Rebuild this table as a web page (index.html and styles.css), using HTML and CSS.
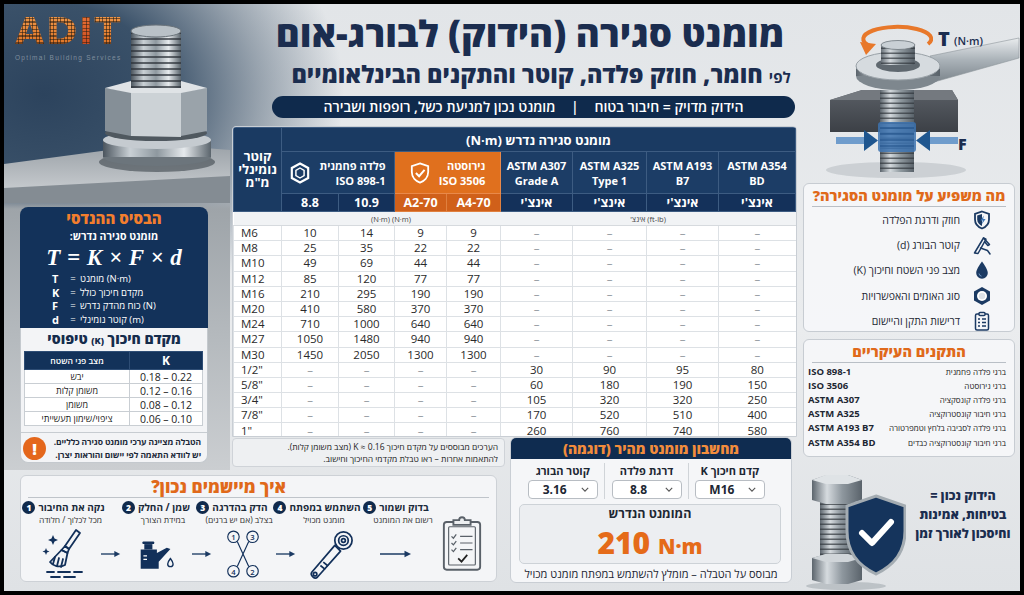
FILE: index.html
```html
<!DOCTYPE html>
<html lang="he">
<head>
<meta charset="utf-8">
<title>מומנט סגירה לבורג-אום</title>
<link rel="stylesheet" href="styles.css">
</head>
<body>
<main class="frame">

  <section class="left">
    <div class="hero">
      <svg class="hero-art" viewBox="0 0 226 199" width="226" height="199" aria-hidden="true">
        <defs>
          <linearGradient id="stl" x1="0" x2="1" y1="0" y2="0">
            <stop offset="0" stop-color="#4b555e"/><stop offset=".25" stop-color="#c9d0d5"/><stop offset=".5" stop-color="#8e989f"/><stop offset=".75" stop-color="#e6eaed"/><stop offset="1" stop-color="#5a646c"/>
          </linearGradient>
          <linearGradient id="plate" x1="0" y1="0" x2="0" y2="1"><stop offset="0" stop-color="#9aa1a7"/><stop offset="1" stop-color="#d3d6d9"/></linearGradient>
          <pattern id="thr" x="127" y="0" width="50" height="6" patternUnits="userSpaceOnUse"><rect width="50" height="6" fill="url(#stl)"/><rect y="4" width="50" height="2" fill="#2b3137" opacity=".7"/></pattern>
        </defs>
        <polygon points="0,160 150,140 226,146 226,199 0,199" fill="url(#plate)"/>
        <polygon points="0,184 226,172 226,199 0,199" fill="#848c93"/>
        <ellipse cx="153" cy="158" rx="58" ry="10" fill="#3e464d" opacity=".6"/>
        <ellipse cx="153" cy="153" rx="54" ry="9" fill="#6c757c"/>
        <rect x="99" y="136" width="108" height="17" fill="url(#stl)"/>
        <ellipse cx="153" cy="136" rx="54" ry="9" fill="#c5cbd0"/>
        <ellipse cx="152" cy="129" rx="51" ry="8" fill="#4f585f"/>
        <polygon points="101,84 127,88 127,132 101,127" fill="#858f97"/>
        <polygon points="127,88 177,88 177,133 127,132" fill="#ccd2d6"/>
        <polygon points="177,88 203,84 203,127 177,132" fill="#9aa3aa"/>
        <polygon points="101,84 127,77 177,77 203,84 177,89 127,89" fill="#dfe3e6"/>
        <rect x="127" y="26" width="50" height="58" fill="url(#thr)"/>
        <ellipse cx="152" cy="27" rx="25" ry="6" fill="#b9c1c7" stroke="#6a737a"/>
      </svg>
      <div class="logo">
        <div class="logo-word">AD<span class="logo-i">I</span>T</div>
        <div class="logo-sub">Optimal Building Services</div>
      </div>
    </div>

    <div class="basis" dir="rtl">
      <div class="basis-top">
        <h2 class="basis-title">הבסיס ההנדסי</h2>
        <div class="basis-sub">מומנט סגירה נדרש:</div>
        <div class="formula" dir="ltr">T = K × F × d</div>
        <ul class="legend" dir="ltr">
          <li><b>T</b><span class="eq">=</span><span>מומנט (N·m)</span></li>
          <li><b>K</b><span class="eq">=</span><span>מקדם חיכוך כולל</span></li>
          <li><b>F</b><span class="eq">=</span><span>כוח מהדק נדרש (N)</span></li>
          <li><b>d</b><span class="eq">=</span><span>קוטר נומינלי (m)</span></li>
        </ul>
      </div>
      <div class="basis-bottom">
        <h3 class="k-title">מקדם חיכוך <small>(K)</small> טיפוסי</h3>
        <table class="k-table">
          <thead><tr><th class="kc">K</th><th class="sc">מצב פני השטח</th></tr></thead>
          <tbody>
            <tr><td class="kv" dir="ltr">0.18 – 0.22</td><td>יבש</td></tr>
            <tr><td class="kv" dir="ltr">0.12 – 0.16</td><td>משומן קלות</td></tr>
            <tr><td class="kv" dir="ltr">0.08 – 0.12</td><td>משומן</td></tr>
            <tr><td class="kv" dir="ltr">0.06 – 0.10</td><td>ציפוי/שימון תעשייתי</td></tr>
          </tbody>
        </table>
        <div class="warn">
          <p>הטבלה מציינה ערכי מומנט סגירה כלליים.<br>יש לוודא התאמה לפי יישום והוראות יצרן.</p>
          <span class="warn-ico">!</span>
        </div>
      </div>
    </div>
  </section>

  <header class="title-area" dir="rtl">
    <h1 class="title">מומנט סגירה (הידוק) לבורג-אום</h1>
    <p class="subtitle"><small>לפי</small> חומר, חוזק פלדה, קוטר והתקנים הבינלאומיים</p>
    <div class="pill">הידוק מדויק = חיבור בטוח <span class="bar">|</span> מומנט נכון למניעת כשל, רופפות ושבירה</div>
  </header>

  <section class="tbl-wrap">
    <table class="torque">
      <colgroup>
        <col style="width:48px"><col style="width:57px"><col style="width:56px"><col style="width:52px"><col style="width:54px"><col style="width:72px"><col style="width:74px"><col style="width:72px"><col>
      </colgroup>
      <thead>
        <tr class="r1">
          <th rowspan="3" class="corner">קוטר נומינלי מ"מ</th>
          <th colspan="8">מומנט סגירה נדרש (N·m)</th>
        </tr>
        <tr class="r2">
          <th colspan="2"><div class="grp"><span>פלדה פחמנית<br>ISO 898-1</span>
            <svg viewBox="0 0 22 24" width="20" height="22"><polygon points="11,1.5 20,6.5 20,17.5 11,22.5 2,17.5 2,6.5" fill="none" stroke="#fff" stroke-width="2.4"/><polygon points="11,6.5 15.5,9.2 15.5,14.8 11,17.5 6.5,14.8 6.5,9.2" fill="none" stroke="#fff" stroke-width="1.6"/></svg></div></th>
          <th colspan="2" class="or"><div class="grp"><span>נירוסטה<br>ISO 3506</span>
            <svg viewBox="0 0 22 24" width="20" height="22"><path d="M11 1.5 L20 4.5 V11 C20 17 15.5 21 11 22.5 C6.5 21 2 17 2 11 V4.5 Z" fill="none" stroke="#fff" stroke-width="2"/><path d="M6.5 12 L10 15.5 L16 8.5" fill="none" stroke="#fff" stroke-width="2.2"/></svg></div></th>
          <th>ASTM A307<br>Grade A</th>
          <th>ASTM A325<br>Type 1</th>
          <th>ASTM A193<br>B7</th>
          <th>ASTM A354<br>BD</th>
        </tr>
        <tr class="r3">
          <th>8.8</th><th>10.9</th><th class="or2">A2-70</th><th class="or2">A4-70</th>
          <th>אינצ'י</th><th>אינצ'י</th><th>אינצ'י</th><th>אינצ'י</th>
        </tr>
        <tr class="r4">
          <td></td><td colspan="4">(N·m) (N·m)</td><td colspan="4">(ft-lb) אינצ'</td>
        </tr>
      </thead>
      <tbody>
        <tr><td class="sz">M6</td><td>10</td><td>14</td><td>9</td><td>9</td><td class="d">–</td><td class="d">–</td><td class="d">–</td><td class="d">–</td></tr>
        <tr><td class="sz">M8</td><td>25</td><td>35</td><td>22</td><td>22</td><td class="d">–</td><td class="d">–</td><td class="d">–</td><td class="d">–</td></tr>
        <tr><td class="sz">M10</td><td>49</td><td>69</td><td>44</td><td>44</td><td class="d">–</td><td class="d">–</td><td class="d">–</td><td class="d">–</td></tr>
        <tr><td class="sz">M12</td><td>85</td><td>120</td><td>77</td><td>77</td><td class="d">–</td><td class="d">–</td><td class="d">–</td><td class="d">–</td></tr>
        <tr><td class="sz">M16</td><td>210</td><td>295</td><td>190</td><td>190</td><td class="d">–</td><td class="d">–</td><td class="d">–</td><td class="d">–</td></tr>
        <tr><td class="sz">M20</td><td>410</td><td>580</td><td>370</td><td>370</td><td class="d">–</td><td class="d">–</td><td class="d">–</td><td class="d">–</td></tr>
        <tr><td class="sz">M24</td><td>710</td><td>1000</td><td>640</td><td>640</td><td class="d">–</td><td class="d">–</td><td class="d">–</td><td class="d">–</td></tr>
        <tr><td class="sz">M27</td><td>1050</td><td>1480</td><td>940</td><td>940</td><td class="d">–</td><td class="d">–</td><td class="d">–</td><td class="d">–</td></tr>
        <tr><td class="sz">M30</td><td>1450</td><td>2050</td><td>1300</td><td>1300</td><td class="d">–</td><td class="d">–</td><td class="d">–</td><td class="d">–</td></tr>
        <tr><td class="sz">1/2"</td><td class="d">–</td><td class="d">–</td><td class="d">–</td><td class="d">–</td><td>30</td><td>90</td><td>95</td><td>80</td></tr>
        <tr><td class="sz">5/8"</td><td class="d">–</td><td class="d">–</td><td class="d">–</td><td class="d">–</td><td>60</td><td>180</td><td>190</td><td>150</td></tr>
        <tr><td class="sz">3/4"</td><td class="d">–</td><td class="d">–</td><td class="d">–</td><td class="d">–</td><td>105</td><td>320</td><td>320</td><td>250</td></tr>
        <tr><td class="sz">7/8"</td><td class="d">–</td><td class="d">–</td><td class="d">–</td><td class="d">–</td><td>170</td><td>520</td><td>510</td><td>400</td></tr>
        <tr><td class="sz">1"</td><td class="d">–</td><td class="d">–</td><td class="d">–</td><td class="d">–</td><td>260</td><td>760</td><td>740</td><td>580</td></tr>
      </tbody>
    </table>
  </section>

  <div class="note" dir="rtl">הערכים מבוססים על מקדם חיכוך K ≈ 0.16 (מצב משומן קלות).<br>להתאמות אחרות – ראו טבלת מקדמי החיכוך וחישוב.</div>

  <section class="calc" dir="rtl">
    <div class="calc-title">מחשבון מומנט מהיר (דוגמה)</div>
    <div class="calc-fields">
      <div class="field"><label>קדם חיכוך K</label><div class="sel"><span>M16</span><svg viewBox="0 0 10 6" width="8" height="5"><path d="M1 1 L5 5 L9 1" fill="none" stroke="#555" stroke-width="1.4"/></svg></div></div>
      <div class="field"><label>דרגת פלדה</label><div class="sel"><span>8.8</span><svg viewBox="0 0 10 6" width="8" height="5"><path d="M1 1 L5 5 L9 1" fill="none" stroke="#555" stroke-width="1.4"/></svg></div></div>
      <div class="field"><label>קוטר הבורג</label><div class="sel"><span>3.16</span><svg viewBox="0 0 10 6" width="8" height="5"><path d="M1 1 L5 5 L9 1" fill="none" stroke="#555" stroke-width="1.4"/></svg></div></div>
    </div>
    <div class="result">
      <div class="result-label">המומנט הנדרש</div>
      <div class="result-val" dir="ltr">210 <small>N·m</small></div>
    </div>
    <div class="calc-foot">מבוסס על הטבלה – מומלץ להשתמש במפתח מומנט מכויל</div>
  </section>

  <section class="right">
    <svg class="wrench-art" viewBox="0 0 220 176" width="220" height="176" aria-hidden="true">
      <defs>
        <linearGradient id="stl2" x1="0" x2="1" y1="0" y2="0">
          <stop offset="0" stop-color="#5b646c"/><stop offset=".3" stop-color="#d3d9dd"/><stop offset=".6" stop-color="#8f999f"/><stop offset="1" stop-color="#59626a"/>
        </linearGradient>
        <linearGradient id="wr" x1="0" x2="0" y1="0" y2="1"><stop offset="0" stop-color="#e9ecee"/><stop offset=".5" stop-color="#aab2b8"/><stop offset="1" stop-color="#7c858c"/></linearGradient>
        <linearGradient id="blk" x1="0" x2="0" y1="0" y2="1"><stop offset="0" stop-color="#5a5f66"/><stop offset="1" stop-color="#3c4046"/></linearGradient>
        <pattern id="thr2" x="80" y="0" width="34" height="5" patternUnits="userSpaceOnUse"><rect width="34" height="5" fill="url(#stl2)"/><rect y="3.5" width="34" height="1.5" fill="#30363c" opacity=".7"/></pattern>
      </defs>
      <ellipse cx="96" cy="166" rx="70" ry="8" fill="#9aa3aa" opacity=".35"/>
      <polygon points="30,96 62,86 152,86 158,96 158,128 30,128" fill="url(#blk)"/>
      <polygon points="30,96 62,86 152,86 158,96" fill="#74797f"/>
      <rect x="80" y="86" width="34" height="82" fill="url(#thr2)"/>
      <rect x="78" y="118" width="38" height="30" rx="3" fill="#3d73b0" opacity=".85"/>
      <path d="M80 124 H114 M80 130 H114 M80 136 H114 M80 142 H114" stroke="#1f4f86" stroke-width="1.2"/>
      <rect x="36" y="133" width="30" height="7" fill="#6f9ccc"/>
      <polygon points="64,126 78,136.5 64,147" fill="#1f568f"/>
      <rect x="128" y="133" width="30" height="7" fill="#6f9ccc"/>
      <polygon points="130,126 116,136.5 130,147" fill="#1f568f"/>
      <text x="158" y="146" class="svg-f">F</text>
      <polygon points="130,52 219,34 219,54 134,78" fill="url(#wr)" stroke="#8d959b" stroke-width=".6"/>
      <ellipse cx="98" cy="72" rx="42" ry="14" fill="#7e878e"/>
      <rect x="56" y="62" width="84" height="10" fill="url(#stl2)"/>
      <ellipse cx="98" cy="62" rx="42" ry="14" fill="#d6dbdf" stroke="#9aa2a8"/>
      <ellipse cx="98" cy="61" rx="22" ry="7" fill="#5f686f"/>
      <rect x="81" y="40" width="34" height="21" fill="url(#thr2)"/>
      <ellipse cx="98" cy="41" rx="17" ry="4.5" fill="#c9d0d5" stroke="#6e777e" stroke-width=".8"/>
      <path d="M70 42 A34 12 0 1 1 128 40" fill="none" stroke="#e8782a" stroke-width="4"/>
      <polygon points="60,38 76,40 66,51" fill="#e8782a"/>
      <text x="138" y="42" class="svg-t">T</text>
      <text x="154" y="41" class="svg-tu">(N·m)</text>
    </svg>

    <div class="card affects" dir="rtl">
      <h3 class="card-title">מה משפיע על מומנט הסגירה?</h3>
      <ul class="aff-list">
        <li><svg viewBox="0 0 20 20"><path d="M10 1.5 L17 4 V9.5 C17 14 14 17 10 18.5 C6 17 3 14 3 9.5 V4 Z" fill="none" stroke="#1b3a63" stroke-width="1.8"/><path d="M10 4 V16 C7.5 15 5.2 12.5 5.2 9.5 V5.5 Z" fill="#1b3a63"/><path d="M11.8 5.5 L8.6 10.6 H10.9 L9.6 14.5 L13.6 9 H11.2 Z" fill="#3f78b8"/></svg><span>חוזק ודרגת הפלדה</span></li>
        <li><svg viewBox="0 0 20 20"><g fill="none" stroke="#1b3a63" stroke-width="1.5" stroke-linejoin="round" stroke-linecap="round"><path d="M2.5 18 L11.5 3 L14 4.2 L6 18.5 Z"/><path d="M11.5 3 L17.5 9.5 L15.8 10.5 L12.8 7"/><path d="M8.5 13 L15.5 15.5 L18 19"/></g></svg><span>קוטר הבורג (d)</span></li>
        <li><svg viewBox="0 0 20 20"><path d="M10 1.5 C10 1.5 4.2 9 4.2 13 A5.8 5.8 0 0 0 15.8 13 C15.8 9 10 1.5 10 1.5 Z" fill="#1b3a63"/><path d="M7 13.5 A3 3 0 0 0 9.5 16.2" fill="none" stroke="#6e96c4" stroke-width="1"/></svg><span>מצב פני השטח וחיכוך (K)</span></li>
        <li><svg viewBox="0 0 20 20"><polygon points="10,1 18,5.5 18,14.5 10,19 2,14.5 2,5.5" fill="#1b3a63"/><circle cx="10" cy="10" r="5" fill="#fff"/><circle cx="10" cy="10" r="3.2" fill="#1b3a63" opacity=".15"/></svg><span>סוג האומים והאפשרויות</span></li>
        <li><svg viewBox="0 0 20 20"><g fill="none" stroke="#1b3a63" stroke-width="1.5"><rect x="3.5" y="3" width="13" height="16" rx="1.5"/><rect x="7" y="1.5" width="6" height="3" rx="1" fill="#fff"/><path d="M6 8 h2 M10 8 h4 M6 11.5 h2 M10 11.5 h4 M6 15 h2 M10 15 h4" stroke-width="1.3"/></g></svg><span>דרישות התקן והיישום</span></li>
      </ul>
    </div>

    <div class="card standards" dir="rtl">
      <h3 class="card-title">התקנים העיקריים</h3>
      <ul class="std-list">
        <li><span class="std-desc">ברגי פלדה פחמנית</span><b class="std-code">ISO 898-1</b></li>
        <li><span class="std-desc">ברגי נירוסטה</span><b class="std-code">ISO 3506</b></li>
        <li><span class="std-desc">ברגי פלדה קונסקציה</span><b class="std-code">ASTM A307</b></li>
        <li><span class="std-desc">ברגי חיבור קונסטרוקציה</span><b class="std-code">ASTM A325</b></li>
        <li><span class="std-desc">ברגי פלדה לסביבה בלחץ וטמפרטורה</span><b class="std-code">ASTM A193 B7</b></li>
        <li><span class="std-desc">ברגי חיבור קונסטרוקציה כבדים</span><b class="std-code">ASTM A354 BD</b></li>
      </ul>
    </div>
  </section>

  <section class="steps">
    <h3 class="steps-title" dir="rtl">איך מיישמים נכון?</h3>
    <div class="steps-grid">
      <div class="sh s1"><div class="sh-top"><span class="num">1</span><b>נקה את החיבור</b></div><div class="sh-sub">מכל לכלוך / חלודה</div></div>
      <div class="sh s2"><div class="sh-top"><span class="num">2</span><b>שמן / החלק</b></div><div class="sh-sub">במידת הצורך</div></div>
      <div class="sh s3"><div class="sh-top"><span class="num">3</span><b>הדק בהדרגה</b></div><div class="sh-sub">בצלב (אם יש ברגים)</div></div>
      <div class="sh s4"><div class="sh-top"><span class="num">4</span><b>השתמש במפתח</b></div><div class="sh-sub">מומנט מכויל</div></div>
      <div class="sh s5"><div class="sh-top"><span class="num">5</span><b>בדוק ושמור</b></div><div class="sh-sub">רשום את המומנט</div></div>

      <svg class="ico i1" viewBox="0 0 50 54" width="50" height="54">
        <g fill="none" stroke="#12305a" stroke-width="1.8" stroke-linecap="round" stroke-linejoin="round">
          <path d="M37 3 L41 6 L30 22 L26 19 Z"/>
          <path d="M26 19 L30 22 L28.5 26 L22.5 23 Z"/>
          <path d="M22.5 23 L28.5 26 L26 38 C20 41 14 39 11 35 Z"/>
          <path d="M16 30 L14 37 M20 31 L18 39 M24 32 L22 40"/>
          <path d="M8 45 H15 M19 45 H31 M35 45 H43 M12 50 H21 M25 50 H36"/>
        </g>
        <path d="M14 8 l1.5 3.5 3.5 1.5 -3.5 1.5 -1.5 3.5 -1.5 -3.5 -3.5 -1.5 3.5 -1.5z" fill="#12305a"/>
        <path d="M7 21 l1 2.5 2.5 1 -2.5 1 -1 2.5 -1 -2.5 -2.5 -1 2.5 -1z" fill="#12305a"/>
      </svg>
      <svg class="ar a1" viewBox="0 0 24 8" width="20" height="8"><path d="M0 4 H19" stroke="#1b3a63" stroke-width="1.6"/><path d="M16 0.5 L23 4 L16 7.5 Z" fill="#1b3a63"/></svg>
      <svg class="ico i2" viewBox="0 0 44 40" width="40" height="36">
        <path d="M5 15 h18 v4 l11 -6 4 1.5 -13 14 v8 H5 Z" fill="#12305a"/>
        <rect x="9" y="9" width="9" height="6" fill="#12305a"/>
        <rect x="7" y="6" width="13" height="3" rx="1" fill="#12305a"/>
        <path d="M8 22 h4 M8 26 h4" stroke="#fff" stroke-width="1.5"/>
        <path d="M38 25 c0 0 -3 4 -3 6 a3 3 0 0 0 6 0 c0 -2 -3 -6 -3 -6z" fill="none" stroke="#12305a" stroke-width="1.5"/>
      </svg>
      <svg class="ar a2" viewBox="0 0 24 8" width="20" height="8"><path d="M0 4 H19" stroke="#1b3a63" stroke-width="1.6"/><path d="M16 0.5 L23 4 L16 7.5 Z" fill="#1b3a63"/></svg>
      <svg class="ico i3" viewBox="0 0 44 54" width="42" height="52">
        <g fill="none" stroke="#12305a" stroke-width="1.2">
          <circle cx="12" cy="9" r="6"/><circle cx="32" cy="9" r="6"/><circle cx="12" cy="45" r="6"/><circle cx="32" cy="45" r="6"/>
          <path d="M16 14 L28 40 M28 14 L16 40"/>
        </g>
        <text x="12" y="12.5" class="svg-n">1</text><text x="32" y="12.5" class="svg-n">3</text><text x="12" y="48.5" class="svg-n">4</text><text x="32" y="48.5" class="svg-n">2</text>
      </svg>
      <svg class="ar a3" viewBox="0 0 24 8" width="20" height="8"><path d="M0 4 H19" stroke="#1b3a63" stroke-width="1.6"/><path d="M16 0.5 L23 4 L16 7.5 Z" fill="#1b3a63"/></svg>
      <svg class="ico i4" viewBox="0 0 50 56" width="48" height="54">
        <g fill="none" stroke="#12305a" stroke-width="1.8" stroke-linejoin="round">
          <path d="M30 19 L36 25 L12 52 C9 55 4 50 6 47 Z"/>
          <circle cx="39" cy="14" r="9"/><circle cx="39" cy="14" r="5"/><circle cx="39" cy="14" r="2"/>
          <circle cx="9.5" cy="49" r="1.8"/>
          <path d="M15 40 L20 44 M18 36.5 L23 40.5"/>
        </g>
      </svg>
      <svg class="ar a4" viewBox="0 0 34 8" width="32" height="8"><path d="M0 4 H29" stroke="#1b3a63" stroke-width="1.6"/><path d="M26 0.5 L33 4 L26 7.5 Z" fill="#1b3a63"/></svg>
      <svg class="ico i5" viewBox="0 0 44 60" width="42" height="58">
        <g fill="none" stroke="#5a6169" stroke-width="2">
          <rect x="3" y="8" width="38" height="50" rx="3"/>
          <rect x="8" y="13" width="28" height="40" rx="1" stroke-width="1.2"/>
          <path d="M13 11 V6 h6 a3 3 0 0 1 6 0 h6 v5 z" fill="#eceef0"/>
          <path d="M11 23 l2 2 3-4 M11 30 l2 2 3-4 M11 37 l2 2 3-4" stroke-width="1.3"/>
          <path d="M20 23 H33 M20 30 H33 M20 37 H33" stroke-width="1.3"/>
          <path d="M18 46 l3.5 3.5 6-7" stroke="#222" stroke-width="1.8"/>
        </g>
      </svg>
    </div>
  </section>

  <section class="badge">
    <svg class="badge-art" viewBox="0 0 100 120" width="100" height="120" aria-hidden="true">
      <defs>
        <linearGradient id="stl3" x1="0" x2="1" y1="0" y2="0">
          <stop offset="0" stop-color="#5c656d"/><stop offset=".3" stop-color="#d6dbdf"/><stop offset=".6" stop-color="#8f989f"/><stop offset="1" stop-color="#5a636b"/>
        </linearGradient>
        <pattern id="thr3" x="14" y="0" width="34" height="5" patternUnits="userSpaceOnUse"><rect width="34" height="5" fill="url(#stl3)"/><rect y="3.5" width="34" height="1.5" fill="#30363c" opacity=".7"/></pattern>
      </defs>
      <ellipse cx="40" cy="116" rx="40" ry="4" fill="#9aa1a7" opacity=".5"/>
      <rect x="14" y="28" width="34" height="62" fill="url(#thr3)"/>
      <polygon points="6,10 20,5 42,5 56,10 56,30 42,34 20,34 6,30" fill="url(#stl3)"/>
      <polygon points="6,10 20,5 42,5 56,10 42,14 20,14" fill="#dfe3e6"/>
      <polygon points="6,88 20,84 42,84 56,88 56,110 42,114 20,114 6,110" fill="url(#stl3)"/>
      <polygon points="6,88 20,84 42,84 56,88 42,92 20,92" fill="#d0d5d9"/>
      <path d="M70 26 L99 36 V61 C99 84 85 97 70 104 C55 97 41 84 41 61 V36 Z" fill="#15345c" stroke="#a4acb2" stroke-width="3"/>
      <path d="M56 63 L66 73 L85 52" fill="none" stroke="#fff" stroke-width="6" stroke-linecap="round" stroke-linejoin="round"/>
    </svg>
    <p class="badge-text" dir="rtl">הידוק נכון =<br>בטיחות, אמינות<br>וחיסכון לאורך זמן</p>
  </section>

</main>
</body>
</html>
```

FILE: styles.css
```css
* { box-sizing: border-box; }
html, body { margin: 0; padding: 0; }
body {
  background: #000;
  font-family: "Open Sans", "Liberation Sans", "DejaVu Sans", sans-serif;
  color: #1d2733;
}
h1, h2, h3, p, ul { margin: 0; padding: 0; }
ul { list-style: none; }

.frame {
  width: 1016px;
  height: 587px;
  margin: 4px;
  display: grid;
  grid-template-columns: 226px 275px 295px 220px;
  grid-template-rows: 121px 312px 33px 121px;
  grid-template-areas:
    "left title title right"
    "left table table right"
    "left note calc right"
    "steps steps calc badge";
  overflow: hidden;
  background:
    radial-gradient(ellipse 300px 230px at 40px 90px, #2c435d 0%, #3a5169 40%, rgba(90,108,126,.55) 72%, rgba(220,225,230,0) 100%),
    linear-gradient(180deg, #e2e5e8 0%, #eaecee 55%, #dfe2e5 100%);
}

/* ---------- left column ---------- */
.left {
  grid-area: left;
  display: flex;
  flex-direction: column;
  background: linear-gradient(180deg, rgba(0,0,0,0) 0, rgba(0,0,0,0) 190px, #9ea4a9 205px, #b4b9bd 330px, #cbced1 466px);
}
.hero { position: relative; height: 199px; flex: none; }
.hero-art { position: absolute; left: 0; top: 0; }
.logo { position: relative; padding: 4px 0 0 11px; width: 140px; }
.logo-word {
  font-family: "DejaVu Sans", sans-serif;
  font-weight: 700;
  font-size: 38px;
  line-height: 46px;
  letter-spacing: 1.5px;
  background-image:
    repeating-linear-gradient(90deg, rgba(30,25,20,.55) 0 1px, transparent 1px 3.5px),
    repeating-linear-gradient(0deg, rgba(30,25,20,.55) 0 1px, transparent 1px 3.5px),
    linear-gradient(180deg, #f4a153, #d8691b);
  -webkit-background-clip: text;
  background-clip: text;
  color: transparent;
}
.logo-i {
  background-image:
    repeating-linear-gradient(90deg, rgba(30,25,20,.5) 0 1px, transparent 1px 3.5px),
    repeating-linear-gradient(0deg, rgba(30,25,20,.5) 0 1px, transparent 1px 3.5px),
    linear-gradient(180deg, #f07a3a, #c2401a);
  -webkit-background-clip: text;
  background-clip: text;
  color: transparent;
}
.logo-sub {
  font-family: "Liberation Sans", sans-serif;
  font-size: 6.5px;
  line-height: 8px;
  letter-spacing: 1.3px;
  color: #7f8e9d;
  margin-top: 0;
}

.basis { margin: 4px 22px 0 16px; }
.basis-top {
  background: #13325a;
  border-radius: 8px 8px 0 0;
  color: #fff;
  text-align: center;
  height: 121px;
  padding-top: 2px;
}
.basis-title { font-size: 15px; line-height: 19px; font-weight: 800; color: #f27e2e; }
.basis-sub { font-size: 10.5px; line-height: 16px; font-weight: 700; }
.formula {
  font-family: "Liberation Serif", "DejaVu Serif", serif;
  font-style: italic;
  font-weight: 700;
  font-size: 23px;
  line-height: 28px;
  word-spacing: 1px;
}
.legend { padding-left: 32px; text-align: left; }
.legend li { display: flex; align-items: center; font-size: 9.5px; height: 13.5px; line-height: 13px; }
.legend b { width: 14px; font-size: 11px; line-height: 13px; }
.legend .eq { width: 14px; text-align: center; }

.basis-bottom {
  background: #f3f4f6;
  border: 1px solid #c4c9ce;
  border-top: 0;
  border-radius: 0 0 8px 8px;
  height: 135px;
}
.k-title { text-align: center; font-size: 14px; line-height: 20px; font-weight: 800; color: #152c4c; padding-top: 1px; }
.k-title small { font-size: 9px; }
.k-table {
  width: 179px;
  margin: 0 4px 0 3px;
  border-collapse: collapse;
  table-layout: fixed;
}
.k-table th { background: #13325a; color: #fff; height: 18px; padding: 0; border: 1px solid #2e4d75; }
.k-table .kc { width: 73px; font-size: 12px; }
.k-table .sc { font-size: 8.5px; font-weight: 600; }
.k-table td { height: 14px; padding: 0; border: 1px solid #c9ced3; background: #fff; text-align: center; font-size: 9px; line-height: 12px; color: #222; }
.k-table td.kv { font-size: 10.5px; }

.warn {
  display: flex;
  align-items: center;
  gap: 5px;
  margin-top: 6px;
  border-top: 1px solid #c7ccd1;
  padding: 3px 6px 0 2px;
}
.warn p { flex: 1; font-size: 8.5px; line-height: 12.5px; font-weight: 700; color: #1d2a3a; white-space: nowrap; letter-spacing: -0.1px; }
.warn-ico {
  flex: none;
  width: 23px;
  height: 23px;
  border-radius: 50%;
  background: #e4671c;
  color: #fff;
  font-weight: 800;
  font-size: 16px;
  display: grid;
  place-items: center;
}

/* ---------- title ---------- */
.title-area { grid-area: title; text-align: center; padding-left: 30px; }
.title { margin-top: 4px; font-size: 36.5px; line-height: 50px; font-weight: 800; color: #1b2d4f; }
.subtitle { font-size: 23.5px; line-height: 32px; font-weight: 800; color: #1b2d4f; padding-left: 22px; }
.subtitle small { font-size: 15px; font-weight: 700; }
.pill {
  margin: 3px 5px 0 12px;
  height: 22px;
  border-radius: 11px;
  background: #0f2a4c;
  color: #fff;
  font-size: 14px;
  font-weight: 600;
  line-height: 22px;
}
.pill .bar { margin: 0 12px; }

/* ---------- torque table ---------- */
.tbl-wrap {
  grid-area: table;
  margin: 1px 3px 0 2px;
  background: #fff;
  border: 1px solid #c9ced4;
  border-radius: 4px 4px 0 0;
  overflow: hidden;
}
.torque { width: 100%; border-collapse: collapse; table-layout: fixed; direction: ltr; }
.torque th, .torque td { direction: rtl; padding: 0; text-align: center; }
.torque thead th {
  background: #1c3d66;
  color: #fff;
  font-weight: 700;
  border: 1px solid #3d5c82;
}
.torque .r1 th { height: 24px; font-size: 13px; background: #1a3a62; }
.torque .corner { font-size: 11.5px; line-height: 13px; background: #1a3a62; padding: 0 4px; }
.torque .r2 th { height: 42px; font-size: 11px; line-height: 15px; }
.torque .r3 th { height: 18px; font-size: 12.5px; background: #14315a; }
.torque th.or { background: #e0701e; border-color: #e9894a; }
.torque th.or2 { background: #d0601a; border-color: #e0803f; }
.grp { display: flex; align-items: center; justify-content: center; gap: 9px; }
.grp span { text-align: right; }
.torque .r4 td { height: 14px; font-size: 7.5px; color: #444; background: #f1f3f5; border-bottom: 1px solid #d6dade; }
.torque tbody td {
  height: 15.2px;
  font-size: 11.5px;
  line-height: 14px;
  color: #2a2a2a;
  border-bottom: 1px solid #dde1e5;
  border-left: 1px solid #dde1e5;
}
.torque tbody td.sz { text-align: left; direction: ltr; padding-left: 7px; }
.torque tbody td.d { color: #8d949b; }

.note {
  grid-area: note;
  margin: 1px 0 3px 2px;
  background: #eef0f2;
  border: 1px solid #cfd3d8;
  border-radius: 4px;
  font-size: 8.5px;
  line-height: 12px;
  text-align: right;
  padding: 2px 6px 0;
  color: #222;
}

/* ---------- calculator ---------- */
.calc {
  grid-area: calc;
  margin: 0 8px 8px 5px;
  display: flex;
  flex-direction: column;
  background: #f5f6f8;
  border: 1px solid #c9ced4;
  border-radius: 6px;
  overflow: hidden;
}
.calc-title { background: #0f2c50; color: #f28c3c; font-size: 14px; font-weight: 800; text-align: center; height: 21px; line-height: 21px; flex: none; }
.calc-fields { display: grid; grid-template-columns: repeat(3, 1fr); margin: 4px 20px 0 10px; flex: none; }
.field { display: flex; flex-direction: column; align-items: center; border-left: 1px solid #d0d4d8; }
.field:last-child { border-left: 0; }
.field label { font-size: 11px; font-weight: 700; line-height: 15px; color: #1d2733; }
.sel {
  margin-top: 2px;
  width: 70px;
  height: 19px;
  border: 1px solid #b8bdc3;
  border-radius: 4px;
  background: #fff;
  display: grid;
  grid-template-columns: 1fr 16px;
  align-items: center;
  direction: ltr;
  font-size: 12px;
  font-weight: 700;
}
.sel span { text-align: center; }
.result {
  flex: none;
  margin: 5px 10px 0 8px;
  height: 60px;
  background: #eceef1;
  border: 1px solid #cdd2d7;
  border-radius: 5px;
  text-align: center;
}
.result-label { font-size: 12.5px; font-weight: 700; line-height: 17px; color: #1d2733; }
.result-val { color: #e56b19; font-weight: 800; font-size: 30px; line-height: 41px; }
.result-val small { font-size: 21px; }
.calc-foot { font-size: 11px; line-height: 16px; text-align: center; margin-top: 2px; color: #1d2733; }

/* ---------- right column ---------- */
.right { grid-area: right; display: flex; flex-direction: column; }
.wrench-art { display: block; flex: none; }
.svg-t { font: 800 20px "Open Sans", "Liberation Sans", sans-serif; fill: #1b2d4f; }
.svg-tu { font: 600 11px "Open Sans", "Liberation Sans", sans-serif; fill: #1b2d4f; }
.svg-f { font: 800 16px "Open Sans", "Liberation Sans", sans-serif; fill: #1b2d4f; }
.card {
  background: rgba(246,247,249,.95);
  border: 1px solid #c7ccd2;
  border-radius: 6px;
  margin: 0 5px 0 3px;
}
.affects { margin-top: 3px; height: 149px; }
.card-title {
  margin: 0 8px;
  padding-top: 2px;
  font-size: 14.5px;
  line-height: 20px;
  text-align: center;
  color: #e0691a;
  font-weight: 800;
  border-bottom: 1px solid #b9bfc6;
}
.aff-list li { display: flex; align-items: center; height: 25.4px; padding-right: 22px; gap: 12px; font-size: 10.5px; color: #1d2733; }
.aff-list svg { width: 20px; height: 20px; flex: none; }
.standards { margin-top: 7px; height: 118px; }
.std-list { padding-top: 1px; }
.std-list li { display: flex; justify-content: space-between; align-items: center; height: 14.2px; padding: 0 8px 0 4px; white-space: nowrap; }
.std-code { direction: ltr; font-size: 9.5px; font-weight: 700; color: #1d2733; }
.std-desc { font-size: 8px; color: #222; }

/* ---------- steps ---------- */
.steps {
  grid-area: steps;
  margin: 5px 8px 9px 16px;
  background: #f4f5f7;
  border: 1px solid #cdd1d6;
  border-radius: 6px;
  padding: 0 5px;
}
.steps-title {
  margin: 0 2px;
  padding: 1px 80px 0 0;
  font-size: 17px;
  line-height: 20px;
  font-weight: 800;
  text-align: center;
  color: #e0691a;
  border-bottom: 1px solid #bfc4ca;
}
.steps-grid {
  display: grid;
  grid-template-columns: 75px 20px 70px 22px 60px 26px 62px 70px 62px;
  grid-template-rows: 22px 62px;
  direction: ltr;
  padding-top: 3px;
}
.sh { grid-row: 1; text-align: center; white-space: nowrap; justify-self: center; }
.sh-top { display: flex; align-items: center; gap: 3px; justify-content: center; }
.sh-top b { direction: rtl; font-size: 10px; line-height: 11px; color: #1b2a3a; }
.num {
  width: 13px; height: 13px; border-radius: 50%;
  background: #102a4c; color: #fff;
  font-size: 8.5px; font-weight: 800;
  display: grid; place-items: center;
}
.sh-sub { direction: rtl; font-size: 8.5px; line-height: 11px; color: #333; padding-left: 14px; }
.s1 { grid-column: 1; }
.s2 { grid-column: 3; }
.s3 { grid-column: 4 / 6; }
.s4 { grid-column: 6 / 8; }
.s5 { grid-column: 8; }
.ico { grid-row: 2; justify-self: center; align-self: center; }
.i1 { grid-column: 1; }
.i2 { grid-column: 3; }
.i3 { grid-column: 5; }
.i4 { grid-column: 7; }
.i5 { grid-column: 9; grid-row: 1 / 3; align-self: center; }
.ar { grid-row: 2; justify-self: center; align-self: center; }
.a1 { grid-column: 2; }
.a2 { grid-column: 4; }
.a3 { grid-column: 6; }
.a4 { grid-column: 8; }
.svg-n { font: 600 8px "Open Sans", "Liberation Sans", sans-serif; fill: #12305a; text-anchor: middle; }

/* ---------- badge ---------- */
.badge { grid-area: badge; display: flex; align-items: flex-start; }
.badge-art { flex: none; margin: 0 0 0 6px; }
.badge-text {
  margin-top: 16px;
  width: 114px;
  text-align: center;
  font-size: 12.5px;
  line-height: 19px;
  font-weight: 800;
  color: #1b2d4f;
  white-space: nowrap;
}
```
